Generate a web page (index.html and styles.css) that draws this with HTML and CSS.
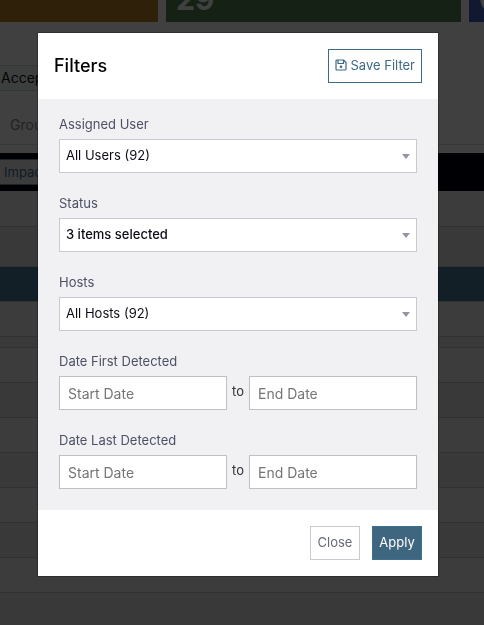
FILE: index.html
```html
<!DOCTYPE html>
<html lang="en">
<head>
    <meta charset="UTF-8">
    <meta name="viewport" content="width=device-width, initial-scale=1.0">
    <title>Filters</title>
    <link rel="stylesheet" href="styles.css">
</head>
<body>
    <div class="page">
        <div class="cards">
            <div class="card card-orange"></div>
            <div class="card card-green">29</div>
            <div class="card card-blue">0</div>
        </div>
        <div class="toolbar">
            <button class="accept-btn" type="button">Accept</button>
        </div>
        <div class="group-bar">Group</div>
        <div class="table-head">
            <span class="head-cell">Impact</span>
        </div>
        <div class="rows">
            <div class="row"></div>
            <div class="row tall"></div>
            <div class="row selected"></div>
            <div class="row"></div>
            <div class="row short"></div>
            <div class="row"></div>
            <div class="row dark"></div>
            <div class="row"></div>
            <div class="row dark"></div>
            <div class="row"></div>
            <div class="row dark"></div>
            <div class="row"></div>
            <div class="row dark"></div>
        </div>
    </div>

    <div class="overlay">
        <form class="modal" role="dialog" aria-labelledby="modal-title">
            <div class="modal-header">
                <h2 id="modal-title">Filters</h2>
                <button class="btn btn-outline" type="button">
                    <svg class="save-icon" viewBox="0 0 24 24" fill="none" stroke="currentColor" stroke-width="2.4" stroke-linejoin="round">
                        <path d="M4 2h13l5 5v13a2 2 0 0 1-2 2H4a2 2 0 0 1-2-2V4a2 2 0 0 1 2-2z" />
                        <path d="M6 2v7h11V2" />
                        <circle cx="12" cy="15.500" r="2.600" fill="currentColor" stroke="none" />
                    </svg>
                    Save Filter
                </button>
            </div>

            <div class="modal-body">
                <div class="field">
                    <label for="user">Assigned User</label>
                    <div class="select-wrap">
                        <select id="user"><option>All Users (92)</option></select>
                    </div>
                </div>
                <div class="field">
                    <label for="status">Status</label>
                    <div class="select-wrap">
                        <select id="status" class="has-value"><option>3 items selected</option></select>
                    </div>
                </div>
                <div class="field">
                    <label for="hosts">Hosts</label>
                    <div class="select-wrap">
                        <select id="hosts"><option>All Hosts (92)</option></select>
                    </div>
                </div>
                <div class="field">
                    <label for="first-start">Date First Detected</label>
                    <div class="date-range">
                        <input type="text" id="first-start" placeholder="Start Date">
                        <label class="to" for="first-end">to</label>
                        <input type="text" id="first-end" placeholder="End Date">
                    </div>
                </div>
                <div class="field">
                    <label for="last-start">Date Last Detected</label>
                    <div class="date-range">
                        <input type="text" id="last-start" placeholder="Start Date">
                        <label class="to" for="last-end">to</label>
                        <input type="text" id="last-end" placeholder="End Date">
                    </div>
                </div>
            </div>

            <div class="modal-footer">
                <button class="btn btn-close" type="button">Close</button>
                <button class="btn btn-apply" type="submit">Apply</button>
            </div>
        </form>
    </div>
</body>
</html>
```

FILE: styles.css
```css
* {
    box-sizing: border-box;
}

body {
    margin: 0;
    font-family: Inter, "Liberation Sans", sans-serif;
    font-size: 13px;
    background-color: #fff;
}

.page {
    height: 100vh;
    overflow: hidden;
}

/* summary cards */
.cards {
    display: grid;
    grid-template-columns: minmax(0, 158fr) minmax(0, 295fr) minmax(0, 15fr);
    gap: 8px;
}

.card {
    display: flex;
    align-items: flex-end;
    height: 22px;
    padding-left: 10px;
    padding-bottom: 8px;
    overflow: hidden;
    color: #fff;
    font-size: 30px;
    font-weight: 700;
    line-height: 30px;
}

.card-orange {
    background-color: #bc8028;
}

.card-green {
    background-color: #508450;
}

.card-blue {
    background-color: #4460c8;
}

.toolbar {
    padding-top: 43px;
}

.accept-btn {
    display: block;
    height: 26px;
    margin-left: -8px;
    padding: 0 8px 2px;
    border: 1px solid #c6d6d8;
    background-color: #f2fafa;
    color: #111;
    font-family: inherit;
    font-size: 14px;
}

.group-bar {
    height: 54px;
    padding: 24px 10px 0;
    border-bottom: 1px solid #ddd;
    color: #888;
    font-size: 14px;
    line-height: 20px;
}

.table-head {
    display: flex;
    align-items: center;
    height: 38px;
    margin-top: 8px;
    background-color: #000010;
}

.head-cell {
    padding: 0 4px;
    border: solid #5b8fa8;
    border-width: 1px 0;
    background-color: #eee;
    color: #3f6f90;
    font-size: 13px;
    line-height: 24px;
}

.row {
    height: 35px;
    border-bottom: 1px solid #c8c8c8;
    background-color: #f0f0f0;
}

.row:first-child {
    height: 36px;
}

.row.tall {
    height: 40px;
    background-color: #e4e4e4;
}

.row.selected {
    background-color: #487c98;
}

.row.short {
    height: 11px;
    background-color: #e4e4e4;
}

.row.dark {
    background-color: #e4e4e4;
}

/* filter dialog */
.overlay {
    position: fixed;
    inset: 0;
    display: flex;
    justify-content: center;
    align-items: flex-start;
    padding: 33px 24px 33px 16px;
    background-color: rgba(0, 0, 0, 0.75);
}

.modal {
    width: 100%;
    max-width: 400px;
    background-color: #fff;
    box-shadow: 0 0 0 1px rgba(0, 0, 0, 0.25);
}

.modal-header {
    display: flex;
    justify-content: space-between;
    align-items: center;
    padding: 16px;
}

.modal-header h2 {
    margin: 0;
    padding-bottom: 2px;
    color: #000;
    font-size: 18px;
    font-weight: 500;
}

.btn {
    min-width: 50px;
    height: 34px;
    padding: 0 6px 2px;
    border: 1px solid;
    font-family: inherit;
    font-size: 13px;
}

.btn-outline {
    display: flex;
    align-items: center;
    gap: 4px;
    border-color: #3d6a85;
    background-color: #fff;
    color: #3d6a85;
}

.save-icon {
    width: 12px;
    height: 12px;
}

.modal-body {
    display: flex;
    flex-direction: column;
    gap: 20px;
    padding: 15px 21px 21px;
    background-color: #f1f1f4;
}

.field {
    display: flex;
    flex-direction: column;
    gap: 5px;
}

.field label {
    color: #4c5064;
    line-height: 20px;
}

.select-wrap {
    position: relative;
}

.select-wrap::after {
    content: "";
    position: absolute;
    top: 15px;
    right: 7px;
    border: solid transparent;
    border-width: 5px 4px 0;
    border-top-color: #9496a4;
    pointer-events: none;
}

select,
input {
    width: 100%;
    height: 34px;
    border: 1px solid #c8c9d1;
    border-radius: 0;
    background-color: #fff;
    color: #0c0c18;
    font-family: inherit;
    font-size: 13px;
}

select {
    padding: 0 20px 2px 6px;
    appearance: none;
}

select.has-value {
    font-weight: 500;
}

.date-range {
    display: flex;
}

.date-range input {
    flex: 1;
    min-width: 0;
    padding: 0 8px;
    border-color: #c0c0c4;
    font-size: 14px;
}

input::placeholder {
    color: #757575;
}

.field .to {
    padding: 5px 5px 0;
    color: #333;
}

.modal-footer {
    display: flex;
    justify-content: flex-end;
    gap: 12px;
    padding: 16px;
}

.btn-close {
    border-color: #c8c9d1;
    background-color: #fff;
    color: #686a7c;
}

.btn-apply {
    border-color: #3d7090;
    background-color: #3f667f;
    color: #fff;
}
```
